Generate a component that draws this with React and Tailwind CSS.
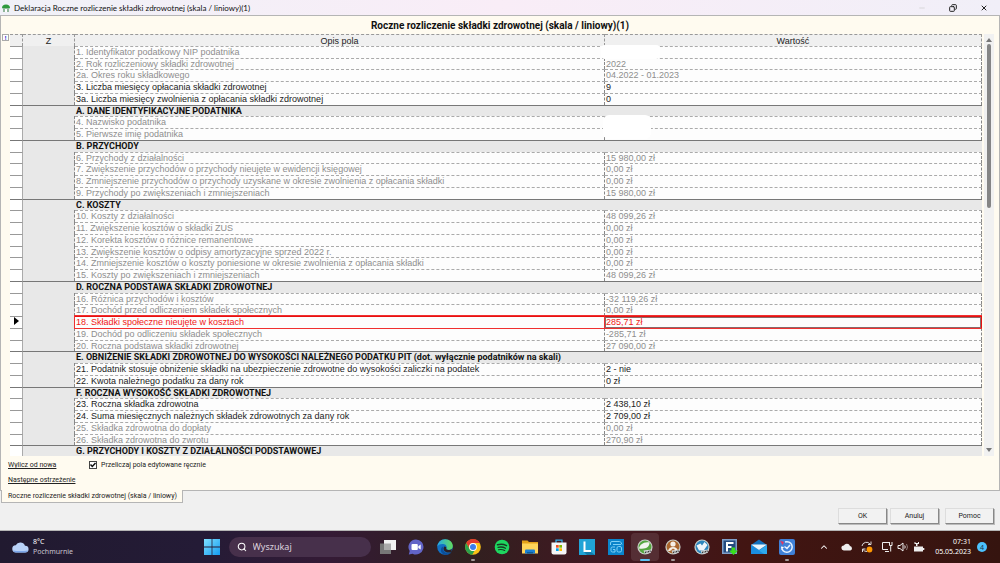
import React from "react";
import { Search, ChevronUp, X, Copy, Minus } from "lucide-react";

const rows = [
  ["1. Identyfikator podatkowy NIP podatnika", "", "redacted"],
  ["2. Rok rozliczeniowy składki zdrowotnej", "2022"],
  ["2a. Okres roku składkowego", "04.2022 - 01.2023"],
  ["3. Liczba miesięcy opłacania składki zdrowotnej", "9", "edit"],
  ["3a. Liczba miesięcy zwolnienia z opłacania składki zdrowotnej", "0", "edit"],
  ["A. DANE IDENTYFIKACYJNE PODATNIKA", null, "head"],
  ["4. Nazwisko podatnika", "", "redactedTall"],
  ["5. Pierwsze imię podatnika", ""],
  ["B. PRZYCHODY", null, "head"],
  ["6. Przychody z działalności", "15 980,00 zł"],
  ["7. Zwiększenie przychodów o przychody nieujęte w ewidencji księgowej", "0,00 zł"],
  ["8. Zmniejszenie przychodów o przychody uzyskane w okresie zwolnienia z opłacania składki", "0,00 zł"],
  ["9. Przychody po zwiększeniach i zmniejszeniach", "15 980,00 zł"],
  ["C. KOSZTY", null, "head"],
  ["10. Koszty z działalności", "48 099,26 zł"],
  ["11. Zwiększenie kosztów o składki ZUS", "0,00 zł"],
  ["12. Korekta kosztów o różnice remanentowe", "0,00 zł"],
  ["13. Zwiększenie kosztów o odpisy amortyzacyjne sprzed 2022 r.", "0,00 zł"],
  ["14. Zmniejszenie kosztów o koszty poniesione w okresie zwolnienia z opłacania składki", "0,00 zł"],
  ["15. Koszty po zwiększeniach i zmniejszeniach", "48 099,26 zł"],
  ["D. ROCZNA PODSTAWA SKŁADKI ZDROWOTNEJ", null, "head"],
  ["16. Różnica przychodów i kosztów", "-32 119,26 zł"],
  ["17. Dochód przed odliczeniem składek społecznych", "0,00 zł"],
  ["18. Składki społeczne nieujęte w kosztach", "285,71 zł", "selected"],
  ["19. Dochód po odliczeniu składek społecznych", "-285,71 zł"],
  ["20. Roczna podstawa składki zdrowotnej", "27 090,00 zł"],
  ["E. OBNIŻENIE SKŁADKI ZDROWOTNEJ DO WYSOKOŚCI NALEŻNEGO PODATKU PIT (dot. wyłącznie podatników na skali)", null, "head"],
  ["21. Podatnik stosuje obniżenie składki na ubezpieczenie zdrowotne do wysokości zaliczki na podatek", "2 - nie", "edit"],
  ["22. Kwota należnego podatku za dany rok", "0 zł", "edit"],
  ["F. ROCZNA WYSOKOŚĆ SKŁADKI ZDROWOTNEJ", null, "head"],
  ["23. Roczna składka zdrowotna", "2 438,10 zł", "edit"],
  ["24. Suma miesięcznych należnych składek zdrowotnych za dany rok", "2 709,00 zł", "edit"],
  ["25. Składka zdrowotna do dopłaty", "0,00 zł"],
  ["26. Składka zdrowotna do zwrotu", "270,90 zł"],
  ["G. PRZYCHODY I KOSZTY Z DZIAŁALNOŚCI PODSTAWOWEJ", null, "head"],
];

function FieldRow({ label, value, kind }) {
  const rowClass = "h-3 align-top nth-[4n+2]:h-[11px]";
  if (kind === "head") {
    return (
      <tr className={rowClass}>
        <td className="border-t border-r border-t-[#777] border-r-[#aaa] bg-white p-0" />
        <td className="border-t border-[#777] bg-[#e8e8e8] p-0" />
        <th colSpan={2} scope="rowgroup" className="whitespace-nowrap border-t border-[#777] bg-[#e8e8e8] p-0 pl-px text-left font-[Roboto,sans-serif] font-bold text-[#111]">
          {label}
        </th>
      </tr>
    );
  }
  const selected = kind === "selected";
  const tone = selected ? "text-[#f01818]" : kind === "edit" ? "text-[#222]" : "text-[#8e8e8e]";
  const line = selected
    ? "border-t border-[#e81010] relative z-10 outline-1 outline-[#f03030]"
    : "border-t border-r border-dashed border-t-[#aaa] border-r-[#888]";
  return (
    <tr className={rowClass}>
      <td className="border-t border-r border-t-[#999] border-r-[#aaa] bg-white p-0">
        {selected && (
          <svg viewBox="0 0 5 8" className="ml-1 block h-2 w-[5px]" aria-hidden="true">
            <path d="M0 0L5 4L0 8Z" />
          </svg>
        )}
      </td>
      <td className={`border-r border-dashed bg-[#e8e8e8] p-0 ${selected ? "border-[#e81010]" : "border-[#888]"}`} />
      <td className={`whitespace-nowrap bg-[#fdfdfd] p-0 pl-px ${tone} ${line}`}>{label}</td>
      <td className={`relative whitespace-nowrap bg-[#fdfdfd] p-0 pl-px ${tone} ${line} ${selected ? "border-r shadow-[inset_0_0_0_1px_#8a6a6a]" : ""}`}>
        {value}
        {kind === "redacted" && <span className="absolute -left-1 -top-0.5 z-10 h-3.5 w-[59px] rounded-sm bg-white" />}
        {kind === "redactedTall" && <span className="absolute -left-0.5 -top-0.5 z-10 h-6 w-12 rounded-md bg-white" />}
      </td>
    </tr>
  );
}

function DialogButton({ children }) {
  return (
    <button type="button" className="h-4 w-[49px] border border-b-[#888] border-r-[#888] border-l-[#ddd] border-t-[#ddd] bg-[#f2f2f2] text-center font-[Roboto,sans-serif] text-[7px] leading-3 text-[#222] shadow-[1px_1px_0_#bbb]">
      {children}
    </button>
  );
}

const icon = "size-4";

function WindowsLogo() {
  return (
    <svg viewBox="0 0 16 16" className={icon}>
      <defs>
        <linearGradient id="win" x1="0" y1="0" x2="1" y2="1">
          <stop offset="0" stopColor="#7fe0ff" />
          <stop offset="1" stopColor="#149bf0" />
        </linearGradient>
      </defs>
      <path fill="url(#win)" d="M0 0h7.6v7.6H0zM8.4 0H16v7.6H8.4zM0 8.4h7.6V16H0zM8.4 8.4H16V16H8.4z" />
    </svg>
  );
}

function TaskView() {
  return (
    <svg viewBox="0 0 16 16" className={icon}>
      <path fill="#777" d="M0 4.5h11V15H0z" />
      <path fill="#f2f2f2" d="M4 1h12v10H4z" />
      <path fill="#aaa" d="M4 4.5h7V11H4z" />
    </svg>
  );
}

function Chat() {
  return (
    <svg viewBox="0 0 16 16" className={icon}>
      <path fill="#6264c7" d="M8 .5a7.5 7.5 0 1 1-3.4 14.2L.8 15.5l.9-3.4A7.5 7.5 0 0 1 8 .5z" />
      <rect x="3.5" y="5" width="6.3" height="6" rx="1" fill="#fff" />
      <path fill="#fff" d="M10.3 7.2 12.7 5.4v5.2l-2.4-1.7z" />
    </svg>
  );
}

function Edge() {
  return (
    <svg viewBox="0 0 16 16" className={icon}>
      <defs>
        <linearGradient id="edge" x1="0" y1="0" x2="1" y2="0">
          <stop offset="0" stopColor="#25a8e8" />
          <stop offset="1" stopColor="#63dc5c" />
        </linearGradient>
      </defs>
      <circle cx="8" cy="8" r="7.8" fill="#1270c4" />
      <path fill="url(#edge)" d="M.3 7.5C.7 3.3 4 .2 8.2.2c4.4 0 7.6 3.3 7.6 6.7 0 2.5-1.9 4-4 4-1.7 0-2.8-.7-2.5-1.4.8-1 .6-3.6-2.2-4.3C4.5 4.6 1.5 5.3.3 7.5z" />
      <path fill="#0b4e9b" d="M6.3 7.5c-1.3 2.5.5 6.3 4 6.7 1.8.2 3.2-.3 4.3-1.2-2 3.4-7 3.6-9.4 1.2-2.3-2.4-1.5-5.8 1.1-6.7z" />
      <path fill="#2b2025" d="M9.3 9.5c-.4.7.8 1.5 2.5 1.5 1.2 0 2.2-.4 3-1.1l-.4 3c-3 1.6-6.9.2-7.7-2.2-.4-1.2 0-2.6.8-3.2 1.3-.1 2.2 1 1.8 2z" />
    </svg>
  );
}

function Chrome() {
  return (
    <svg viewBox="0 0 16 16" className={icon}>
      <circle cx="8" cy="8" r="7.8" fill="#fbc116" />
      <path fill="#e33b2e" d="M1.2 4.1A7.8 7.8 0 0 1 14.8 4.1H8A3.9 3.9 0 0 0 4.6 10z" />
      <path fill="#2ba24c" d="M1.2 4.1 4.6 10A3.9 3.9 0 0 0 9.7 11.5L7.2 15.8A7.8 7.8 0 0 1 1.2 4.1z" />
      <circle cx="8" cy="8" r="3.9" fill="#fff" />
      <circle cx="8" cy="8" r="3" fill="#3b7ded" />
    </svg>
  );
}

function Spotify() {
  return (
    <svg viewBox="0 0 16 16" className={icon}>
      <circle cx="8" cy="8" r="7.3" fill="#1ed760" />
      <g fill="none" stroke="#173c22" strokeLinecap="round">
        <path strokeWidth="1.5" d="M3.5 5.8c3-.9 6.3-.6 9 .8" />
        <path strokeWidth="1.3" d="M4 8.4c2.5-.7 5.3-.4 7.5.8" />
        <path strokeWidth="1.1" d="M4.5 10.8c2-.5 4.3-.3 6.2.7" />
      </g>
    </svg>
  );
}

function Folder() {
  return (
    <svg viewBox="0 0 16 16" className={icon}>
      <path fill="#e5a21a" d="M0 1.5h5.5l1.5 1.5H16v10H0z" />
      <path fill="#ffd45a" d="M0 4.5h16v10H0z" />
      <path fill="#1a7fd4" d="M3 11.5q0-1 1-1h8q1 0 1 1v3H3z" />
      <path fill="#0b5c9e" d="M5 13h6v1.5H5z" />
    </svg>
  );
}

function Store() {
  return (
    <svg viewBox="0 0 16 16" className={icon}>
      <path fill="none" stroke="#32b2ee" strokeWidth="1.2" d="M5 4V1.2h6V4" />
      <path fill="#f5f5f7" d="M.5 3.5h15v10q0 2-2 2h-11q-2 0-2-2z" />
      <path fill="#f25022" d="M5 6h2.7v2.7H5z" />
      <path fill="#7fba00" d="M8.3 6H11v2.7H8.3z" />
      <path fill="#00a4ef" d="M5 9.3h2.7V12H5z" />
      <path fill="#ffb900" d="M8.3 9.3H11V12H8.3z" />
    </svg>
  );
}

function TileL() {
  return (
    <svg viewBox="0 0 16 16" className={icon}>
      <path fill="#20a3d6" d="M0 0h16v16H0z" />
      <path fill="#117aa9" d="M5 13h7l4 3H8z" />
      <path fill="none" stroke="#fff" strokeWidth="2" d="M5.5 2.5V12H12" />
    </svg>
  );
}

function TileGo() {
  return (
    <svg viewBox="0 0 16 16" className={icon}>
      <path fill="#0a84cb" d="M0 0h16v16H0z" />
      <g fill="none" stroke="#7fd0f5" strokeWidth="1">
        <path d="M2.5 6V4q0-1.500 1.5-1.500h7.500q1 0 1.500 1L14 5.500M5 5.500h8" />
        <path d="M7 8H4.500Q3 8 3 9.500v2Q3 13 4.500 13H7v-2.500H5" />
        <rect x="9" y="7.500" width="4.500" height="5.500" rx="1.500" />
      </g>
    </svg>
  );
}

function Badge({ ring, inner }) {
  return (
    <svg viewBox="0 0 16 16" className={icon}>
      <circle cx="8" cy="8" r="7.6" fill="#c9cec8" />
      <circle cx="8" cy="8" r="6.4" fill={ring} />
      {inner}
      <path fill="#d5d8da" d="M6.5 11.5 15 10.5 13.5 14 8 15z" />
      <path stroke="#333" strokeWidth="1.5" strokeDasharray="1 .6" d="M8 13.5 14 12" />
    </svg>
  );
}

function TileF() {
  return (
    <svg viewBox="0 0 16 16" className={icon}>
      <path fill="#7f9fc8" d="M0 0h15v15H0z" />
      <path fill="#244a80" d="M1.5 1.5h12v12h-12z" />
      <path fill="none" stroke="#fff" strokeWidth="2" d="M5 12.5V4h6.5M5 8h4.5" />
      <path fill="#39e01c" d="M9.5 8.500h3.500v3H16l-4.500 4.500L7 11.500h2.500z" />
    </svg>
  );
}

function Mail() {
  return (
    <svg viewBox="0 0 16 16" className={icon}>
      <path fill="#1270bd" d="M0 6 8 .5 16 6v9H0z" />
      <path fill="#2fa9ee" d="M0 6l8 5.500L16 6v9H0z" />
      <path fill="#1a8de0" d="M0 15V6l13 9z" />
      <path fill="#e8f5fd" d="M0 5.500h16L8 11z" />
    </svg>
  );
}

function Sync() {
  return (
    <svg viewBox="0 0 16 16" className={icon}>
      <rect width="16" height="16" rx="2" fill="#3f80d8" />
      <path fill="none" stroke="#e7f2ff" strokeWidth="1.5" d="M6 3A5.300 5.300 0 1 1 3 10M5.500 7.500 8 9.500l3-3.500" />
      <path fill="#e33560" d="M1 1.500 5 3 3.500 6z" />
      <path fill="#fff" d="M2 7.500 5 8 2.500 11z" />
    </svg>
  );
}

const leaf = <path fill="#f3f5ef" d="M2 9.500C2.500 6 6.500 2.500 12.500 3.500c0 4-3 7-10.500 6z" />;
const person = (
  <g fill="#f6efe6">
    <circle cx="8" cy="5" r="2.6" />
    <path d="M3 12q1-4 5-4t5 4l-2-.5L8 9.500 5 12z" />
  </g>
);
const book = <path fill="#eef6fb" d="M2.500 6.500 6.500 4.500 8 6.500l2.500-3.500 3 3-3.500 5-5 .5z" />;

const pinned = [
  ["Widok zadań", <TaskView />],
  ["Czat", <Chat />],
  ["Edge", <Edge />],
  ["Chrome", <Chrome />, "open"],
  ["Spotify", <Spotify />],
  ["Eksplorator plików", <Folder />],
  ["Sklep", <Store />],
  ["Program L", <TileL />],
  ["Program GO", <TileGo />],
  ["Księga", <Badge ring="#55a63f" inner={leaf} />, "active"],
  ["Kadry", <Badge ring="#a9652d" inner={person} />, "open"],
  ["Biuro", <Badge ring="#2c86bd" inner={book} />],
  ["Faktury", <TileF />],
  ["Poczta", <Mail />],
  ["Kopia", <Sync />, "open"],
];

function AppButton({ name, art, state }) {
  return (
    <button
      type="button"
      aria-label={name}
      className={`relative grid size-7 place-items-center rounded ${state === "active" ? "bg-white/10" : ""}`}
    >
      {art}
      {state === "open" && <span className="absolute bottom-0 h-0.5 w-1 rounded bg-[#a59a9a]" />}
      {state === "active" && <span className="absolute bottom-0 h-0.5 w-2.5 rounded bg-[#5cc3f5]" />}
    </button>
  );
}

function Taskbar() {
  return (
    <footer className="flex h-8 shrink-0 items-center bg-[linear-gradient(90deg,#211a30,#241b36_20%,#341a35_33%,#30201f_46%,#421822_60%,#421512_75%,#35140f)] font-['Noto_Sans',sans-serif] text-[7px] text-white">
      <div className="flex flex-1 items-center gap-1 pl-3">
        <svg viewBox="0 0 17 12" className="h-3 w-[17px]" aria-hidden="true">
          <path fill="#b9d2f8" d="M4 11.5a3.6 3.6 0 0 1-.3-7.2A5.2 5.2 0 0 1 13 4.7a3.4 3.4 0 0 1 .3 6.8z" />
          <path fill="#7ba5ea" d="M1 9.5q7 1 15 0-1 2-3 2H4q-2 0-3-2z" />
        </svg>
        <div className="leading-[10px]">
          <div>8°C</div>
          <div className="text-[#c9c4cf]">Pochmurnie</div>
        </div>
      </div>
      <nav className="flex items-center" aria-label="Pasek zadań">
        <AppButton name="Start" art={<WindowsLogo />} />
        <label className="mx-[3px] flex h-5 w-[142px] items-center gap-1.5 rounded-full bg-[#47304b] pl-2">
          <Search className="size-2.5 shrink-0" strokeWidth={2.5} aria-hidden="true" />
          <input aria-label="Wyszukaj" placeholder="Wyszukaj" className="w-full bg-transparent text-[9px] outline-none placeholder:text-[#ddd3df]" />
        </label>
        <div className="flex w-[428px] justify-between">
          {pinned.map(([name, art, state]) => (
            <AppButton key={name} name={name} art={art} state={state} />
          ))}
        </div>
      </nav>
      <div className="flex flex-1 items-center justify-end gap-2 pr-[13px]">
        <ChevronUp className="mr-1 size-2.5" strokeWidth={2.5} aria-hidden="true" />
        <svg viewBox="0 0 12 8" className="h-2 w-3" aria-hidden="true">
          <path fill="#eee" d="M3 7.5a2.500 2.500 0 0 1-.2-5A3.500 3.500 0 0 1 9 3a2.300 2.300 0 0 1 .3 4.500z" />
        </svg>
        <svg viewBox="0 0 12 12" className="size-3" aria-hidden="true">
          <path fill="none" stroke="#ddd" d="M1 5a4.500 4.500 0 0 1 8-2M10 .5V3.500H7M1.500 11V8H4.500M2 8.500A4.500 4.500 0 0 0 6 10.500" />
          <circle cx="8.5" cy="8.5" r="2.9" fill="#ff9800" />
        </svg>
        <div className="flex items-center gap-1">
          <svg viewBox="0 0 12 12" className="size-3" aria-hidden="true">
            <path fill="none" stroke="#eee" d="M8 1.500H1.500v7H7M4 10.500h4M8.500 1v3.500h2.500V1M9.700 4.500v6" />
          </svg>
          <svg viewBox="0 0 12 12" className="size-3" aria-hidden="true">
            <path fill="none" stroke="#eee" d="M1 4.500h2L6 2v8L3 7.500H1zM7.700 4.500q1 1.500 0 3" />
            <path fill="none" stroke="#8c7a78" d="M9.500 3q2 3 0 6" />
          </svg>
          <svg viewBox="0 0 12 12" className="size-3" aria-hidden="true">
            <path fill="#eee" d="M1 5.500h9v5H1zM10 7h1.300v2H10zM1.500 1v2h1.500v2h1.500V3H6V1H5v1H2.500V1z" />
          </svg>
        </div>
        <div className="ml-0.5 text-right leading-[10px]">
          <div>07:31</div>
          <div>05.05.2023</div>
        </div>
        <span className="-ml-0.5 grid size-2.5 place-items-center rounded-full bg-[#4cc2ff] leading-none text-[#16324a]">4</span>
      </div>
    </footer>
  );
}

export default function App() {
  const th = "border-t border-r border-dashed border-[#999] bg-[#f0f0f0] p-0 text-center font-normal";
  return (
    <div className="flex min-h-screen flex-col bg-[#f0f0f0] font-[Roboto,sans-serif] text-[#222]">
      <header className="flex h-[15px] shrink-0 items-center bg-linear-to-r from-[#f0f1f8] via-[#f9edf7] to-[#f1eff8] pl-0.5">
        <svg viewBox="0 0 8 8" className="size-2" aria-hidden="true">
          <path fill="#2f9a3d" d="M0 4q0-3.500 4-3.500T8 4l-1 .5H1z" />
          <path fill="#8fb59a" d="M1 4.500h6V8H1z" />
          <path fill="#fff" d="M3 5h2v3H3z" />
        </svg>
        <div className="ml-1 flex-1 whitespace-nowrap font-[Lato,sans-serif] text-[8px] leading-3 text-[#111]">
          Deklaracja Roczne rozliczenie składki zdrowotnej (skala / liniowy)(1)
        </div>
        <div className="flex gap-[23px] pr-3">
          <button type="button" aria-label="Minimalizuj"><Minus className="size-2 text-[#ccc]" /></button>
          <button type="button" aria-label="Przywróć"><Copy className="size-2 -scale-x-100" strokeWidth={3} /></button>
          <button type="button" aria-label="Zamknij"><X className="size-2" strokeWidth={3} /></button>
        </div>
      </header>

      <main className="flex flex-1 flex-col border-x border-t border-[#b5b5b5] bg-[#fffbf0]">
        <h1 className="pt-[3px] pb-px text-center text-[10px] leading-[14px] font-bold text-[#111]">
          Roczne rozliczenie składki zdrowotnej (skala / liniowy)(1)
        </h1>
        <div className="flex pr-[5px]">
          <div className="w-[9px] shrink-0 pl-px">
            <div className="grid size-[7px] place-items-center border border-[#aaa] bg-white text-[6px] leading-none font-bold text-[#22c]">!</div>
          </div>
          <div className="h-[422px] min-w-0 flex-1 overflow-hidden">
            <table className="w-full table-fixed border-separate border-spacing-0 font-['Liberation_Sans',sans-serif] text-[9px] leading-[10px]">
              <colgroup>
                <col className="w-[13px]" />
                <col className="w-[52px]" />
                <col />
                <col className="w-[38.8%]" />
              </colgroup>
              <thead>
                <tr className="h-3">
                  <th className={th} />
                  <th scope="col" className={th}>Z</th>
                  <th scope="col" className={th}>Opis pola</th>
                  <th scope="col" className={th}>Wartość</th>
                </tr>
              </thead>
              <tbody>
                {rows.map(([label, value, kind]) => (
                  <FieldRow key={label} label={label} value={value} kind={kind} />
                ))}
              </tbody>
            </table>
          </div>
          <div className="ml-0.5 flex w-2.5 shrink-0 flex-col items-center justify-between bg-[#f1f1f1] py-1" aria-hidden="true">
            <svg viewBox="0 0 6 4" className="h-1 w-1.5"><path fill="#777" d="M0 4 3 0l3 4z" /></svg>
            <div className="mb-auto mt-0.5 h-[164px] w-1 rounded-full bg-[#858585]" />
            <svg viewBox="0 0 6 4" className="h-1 w-1.5"><path fill="#777" d="M0 0h6L3 4z" /></svg>
          </div>
        </div>
        <div className="flex flex-1 flex-col pl-[7px] pt-1 text-[7px] leading-[10px]">
          <div className="flex items-center">
            <a href="#wylicz" className="w-20 underline">Wylicz od nowa</a>
            <label className="flex items-center gap-[3px]">
              <span className="relative grid size-2.5 place-items-center">
                <input type="checkbox" defaultChecked className="peer size-2 appearance-none border border-[#444] bg-white" />
                <svg viewBox="0 0 8 8" className="pointer-events-none absolute size-2 opacity-0 peer-checked:opacity-100" aria-hidden="true">
                  <path fill="none" stroke="#111" strokeWidth="1.5" d="M1.5 3.5 3.3 5.5 6.5 2" />
                </svg>
              </span>
              Przeliczaj pola edytowane ręcznie
            </label>
          </div>
          <a href="#ostrzezenie" className="mt-[5px] self-start underline">Następne ostrzeżenie</a>
        </div>
      </main>

      <section className="h-[41px] shrink-0 border-t border-b border-[#b5b5b5]">
        <div className="flex items-start">
          <button type="button" className="-mt-px ml-px h-[13px] w-[182px] whitespace-nowrap border-x border-b border-[#b5b5b5] bg-[#fffbf0] pl-1.5 text-left text-[7px] leading-3">
            Roczne rozliczenie składki zdrowotnej (skala / liniowy)
          </button>
          <div className="ml-auto mt-[17px] flex gap-1.5 pr-1.5">
            <div className="flex gap-[3px]">
              <DialogButton>OK</DialogButton>
              <DialogButton>Anuluj</DialogButton>
            </div>
            <DialogButton>Pomoc</DialogButton>
          </div>
        </div>
      </section>
      <Taskbar />
    </div>
  );
}
